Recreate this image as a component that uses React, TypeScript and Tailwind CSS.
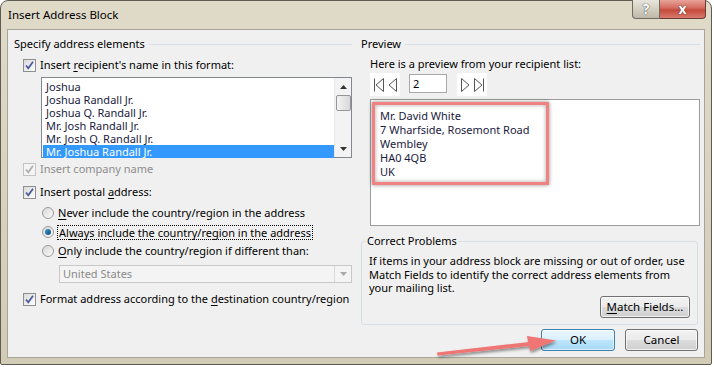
import React from "react";

const Check = ({ disabled = false }: { disabled?: boolean }) => (
  <div
    className={
      "w-[13px] h-[13px] border flex items-center justify-center shrink-0 " +
      (disabled
        ? "border-[#c4c4c4] bg-[#f4f4f4]"
        : "border-[#8e8f8f] bg-gradient-to-br from-[#dadada] to-[#ffffff]")
    }
  >
    <svg width="11" height="11" viewBox="0 0 11 11">
      <path
        d="M2 5.5 L4.3 8.3 L9 1.8"
        fill="none"
        stroke={disabled ? "#b0b0b0" : "#4a5d9a"}
        strokeWidth="1.8"
      />
    </svg>
  </div>
);

const Radio = ({ on = false }: { on?: boolean }) => (
  <div className="w-[12px] h-[12px] rounded-full border border-[#9a9a9a] bg-gradient-to-br from-[#d8d8d8] to-[#fafafa] flex items-center justify-center shrink-0">
    {on && (
      <div className="w-[6px] h-[6px] rounded-full bg-gradient-to-br from-[#3a9ad8] to-[#0c4a78]" />
    )}
  </div>
);

const U = ({ children }: { children: React.ReactNode }) => (
  <span className="underline underline-offset-[2px]">{children}</span>
);

const NavFirst = () => (
  <svg width="12" height="14" viewBox="0 0 12 14">
    <path d="M1.5 0.5 V13.5" stroke="#555" strokeWidth="1" fill="none" />
    <path d="M10.5 0.5 L3 7 L10.5 13.5 Z" stroke="#555" strokeWidth="1" fill="none" />
  </svg>
);
const NavPrev = () => (
  <svg width="10" height="14" viewBox="0 0 10 14">
    <path d="M8.5 0.5 L1 7 L8.5 13.5 Z" stroke="#555" strokeWidth="1" fill="none" />
  </svg>
);
const NavNext = () => (
  <svg width="10" height="14" viewBox="0 0 10 14">
    <path d="M1.5 0.5 L9 7 L1.5 13.5 Z" stroke="#555" strokeWidth="1" fill="none" />
  </svg>
);
const NavLast = () => (
  <svg width="12" height="14" viewBox="0 0 12 14">
    <path d="M1.5 0.5 L9 7 L1.5 13.5 Z" stroke="#555" strokeWidth="1" fill="none" />
    <path d="M10.5 0.5 V13.5" stroke="#555" strokeWidth="1" fill="none" />
  </svg>
);

const btn =
  "h-[22px] rounded-[3px] border border-[#707070] bg-[linear-gradient(#f2f2f2_0%,#ebebeb_50%,#dddddd_50%,#cfcfcf_100%)] shadow-[inset_0_0_0_1px_rgba(255,255,255,0.7)] flex items-center justify-center text-[11.5px] text-black";

export default function App() {
  const names = [
    "Joshua",
    "Joshua Randall Jr.",
    "Joshua Q. Randall Jr.",
    "Mr. Josh Randall Jr.",
    "Mr. Josh Q. Randall Jr.",
    "Mr. Joshua Randall Jr.",
  ];
  return (
    <div className="relative w-[714px] h-[367px] bg-white overflow-hidden font-['Noto_Sans',sans-serif] text-[11px] leading-[16px] text-[#111]">
      <div className="w-[712px] h-[365px] rounded-t-[8px] rounded-b-[2px] border border-[#5e5b52] bg-gradient-to-b from-[#e0dac9] to-[#d2cbb5] flex flex-col px-[6px] pb-[6px]">
        {/* title bar */}
        <div className="h-[28px] flex items-start justify-between shrink-0">
          <div className="pl-[1px] pt-[6px] text-[11.5px] text-black">Insert Address Block</div>
          <div className="flex -mt-px -mr-[1px]">
            <div className="w-[28px] h-[19px] rounded-bl-[4px] border border-[#6f6b60] border-t-0 bg-gradient-to-b from-[#e8e6dc] to-[#bdb8a8] flex items-center justify-center">
              <span className="text-[14px] font-bold text-white [text-shadow:0_0_1px_#444,0_0_1px_#444] leading-none">?</span>
            </div>
            <div className="w-[46px] h-[19px] rounded-br-[4px] border border-l-0 border-t-0 border-[#6f3a34] bg-[linear-gradient(#e8a49a_0%,#d46a5c_45%,#c44a3c_55%,#d87a6c_100%)] flex items-center justify-center">
              <span className="text-[14px] font-bold text-white [text-shadow:0_0_1px_#5a1a14,0_0_1px_#5a1a14] leading-none">x</span>
            </div>
          </div>
        </div>
        {/* body */}
        <div className="flex-1 border border-[#a7a498] bg-[#f0f0f0] flex">
          {/* left column */}
          <div className="w-[348px] flex flex-col">
            <div className="mt-[6px] h-[16px] pl-[6px] pr-[4px] flex items-center gap-[4px]">
              <span className="text-black">Specify address elements</span>
              <div className="flex-1 h-px bg-[#d5dfe5]" />
            </div>
            <div className="mt-[5px] h-[16px] ml-[15px] flex items-center gap-[4px]">
              <Check />
              <span className="text-black">
                Insert <U>r</U>ecipient's name in this format:
              </span>
            </div>
            <div className="mt-[4px] ml-[33px] w-[311px] h-[81px] border border-[#828790] bg-white flex">
              <div className="flex-1 pl-px pt-[2px] flex flex-col">
                {names.map((n, i) => (
                  <div
                    key={n}
                    className={
                      "h-[13px] leading-[13px] pl-[3px] text-[#1a1a40] " +
                      (i === names.length - 1 ? "bg-[#3399ff] text-white" : "")
                    }
                  >
                    {n}
                  </div>
                ))}
              </div>
              <div className="w-[17px] bg-[#f3f3f3] border-l border-[#e8e8e8] flex flex-col items-center">
                <div className="h-[17px] flex items-center justify-center">
                  <svg width="7" height="4" viewBox="0 0 7 4">
                    <path d="M0 4 L3.5 0 L7 4 Z" fill="#333" />
                  </svg>
                </div>
                <div className="w-[15px] h-[16px] rounded-[2px] border border-[#959595] bg-gradient-to-r from-[#f4f4f4] to-[#d8d8d8]" />
                <div className="flex-1" />
                <div className="h-[17px] flex items-center justify-center">
                  <svg width="7" height="4" viewBox="0 0 7 4">
                    <path d="M0 0 L3.5 4 L7 0 Z" fill="#333" />
                  </svg>
                </div>
              </div>
            </div>
            <div className="mt-[3px] h-[16px] ml-[15px] flex items-center gap-[4px]">
              <Check disabled />
              <span className="text-[#8d8d8d]">Insert company name</span>
            </div>
            <div className="mt-[7px] h-[16px] ml-[15px] flex items-center gap-[4px]">
              <Check />
              <span className="text-black">
                Insert postal <U>a</U>ddress:
              </span>
            </div>
            <div className="mt-[5px] h-[16px] ml-[34px] flex items-center gap-[4px]">
              <Radio />
              <span className="text-black">
                <U>N</U>ever include the country/region in the address
              </span>
            </div>
            <div className="mt-[3px] h-[16px] ml-[34px] flex items-center gap-[3px]">
              <Radio on />
              <span className="text-black border border-dotted border-black px-px leading-[13px]">
                Al<U>w</U>ays include the country/region in the address
              </span>
            </div>
            <div className="mt-[3px] h-[16px] ml-[34px] flex items-center gap-[4px]">
              <Radio />
              <span className="text-black">
                <U>O</U>nly include the country/region if different than:
              </span>
            </div>
            <div className="mt-[6px] ml-[51px] w-[293px] h-[18px] border border-[#c8c8c8] bg-[#f4f4f4] flex">
              <div className="flex-1 pl-[3px] leading-[16px] text-[#8a8a8a]">United States</div>
              <div className="w-[17px] border-l border-[#dadada] flex items-center justify-center">
                <svg width="7" height="4" viewBox="0 0 7 4">
                  <path d="M0 0 L3.5 4 L7 0 Z" fill="#a8a8a8" />
                </svg>
              </div>
            </div>
            <div className="mt-[8px] h-[16px] ml-[15px] flex items-center gap-[4px]">
              <Check />
              <span className="text-black">
                Format address according to the <U>d</U>estination country/region
              </span>
            </div>
          </div>
          {/* right column */}
          <div className="flex-1 flex flex-col">
            <div className="mt-[6px] h-[16px] pl-[5px] pr-[4px] flex items-center gap-[4px]">
              <span className="text-black">Preview</span>
              <div className="flex-1 h-px bg-[#d5dfe5]" />
            </div>
            <div className="mt-[4px] h-[16px] ml-[14px] text-black">Here is a preview from your recipient list:</div>
            <div className="mt-[1px] ml-[14px] h-[23px] flex items-start">
              <div className="w-[30px] h-[23px] bg-white flex items-center justify-center gap-[3px]">
                <NavFirst />
                <NavPrev />
              </div>
              <div className="ml-[9px] mt-[1px] w-[38px] h-[19px] border border-[#a9a9a9] bg-white pl-[3px] leading-[17px] text-black">
                2
              </div>
              <div className="ml-[10px] w-[30px] h-[23px] bg-white flex items-center justify-center gap-[3px]">
                <NavNext />
                <NavLast />
              </div>
            </div>
            <div className="mt-[3px] ml-[14px] w-[330px] h-[127px] border border-[#9c9c9c] bg-white">
              <div className="mt-[2px] ml-[1px] w-[177px] h-[83px] border-[3px] border-[#f28282] shadow-[0_0_4px_rgba(0,0,0,0.45),inset_0_0_4px_rgba(0,0,0,0.35)] pl-[5px] pt-[4px] leading-[14px] text-[#1a1a40]">
                <div>Mr. David White</div>
                <div>7 Wharfside, Rosemont Road</div>
                <div>Wembley</div>
                <div>HA0 4QB</div>
                <div>UK</div>
              </div>
            </div>
            <fieldset className="mt-[7px] ml-[5px] w-[337px] h-[92px] border border-[#d5dfe5] rounded-[3px] flex flex-col">
              <legend className="ml-[4px] px-px text-black leading-[16px]">Correct Problems</legend>
              <div className="pl-[7px] mt-[5px] leading-[13.5px] text-black">
                <div>If items in your address block are missing or out of order, use</div>
                <div>Match Fields to identify the correct address elements from</div>
                <div>your mailing list.</div>
              </div>
              <div className="flex justify-end pr-[7px] mt-[1px]">
                <div className={btn + " w-[90px]"}>
                  <span>
                    <U>M</U>atch Fields...
                  </span>
                </div>
              </div>
            </fieldset>
            <div className="mt-[4px] flex justify-end gap-[10px] pr-[6px]">
              <div className="w-[74px] h-[22px] rounded-[3px] border border-[#3c7fb1] bg-[linear-gradient(#eaf6fd_0%,#d9f0fc_50%,#bee6fd_50%,#a7d9f5_100%)] shadow-[inset_0_0_0_1px_rgba(255,255,255,0.6)] flex items-center justify-center text-[11.5px] text-black">
                OK
              </div>
              <div className={btn + " w-[73px]"}>Cancel</div>
            </div>
          </div>
        </div>
      </div>
      {/* annotation arrow */}
      <svg className="absolute left-0 top-0 pointer-events-none" width="714" height="367" viewBox="0 0 714 367">
        <defs>
          <filter id="sh" x="-20%" y="-50%" width="140%" height="200%">
            <feDropShadow dx="1" dy="2" stdDeviation="1.5" floodColor="#000" floodOpacity="0.45" />
          </filter>
        </defs>
        <g filter="url(#sh)">
          <path d="M437 352.5 L533 341.5 L533.6 345.6 L437.6 355.5 Z" fill="#f07575" />
          <path d="M527 336 L556 340.5 L530 351 Z" fill="#f07575" />
        </g>
      </svg>
    </div>
  );
}
